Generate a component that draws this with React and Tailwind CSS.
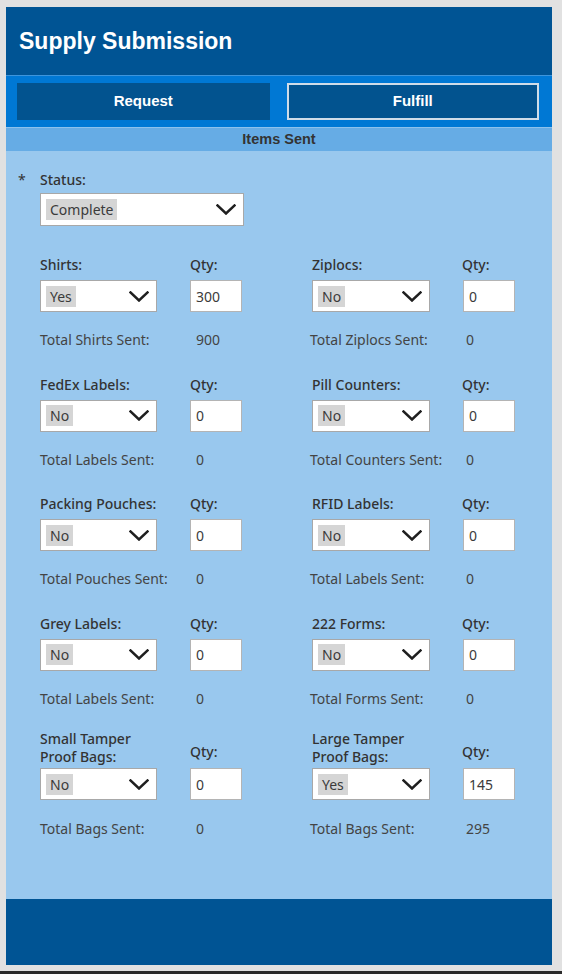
import React from 'react';

const rows = [
    {
        left: { label: 'Shirts:', value: 'Yes', qty: '300', total: 'Total Shirts Sent:', sent: '900' },
        right: { label: 'Ziplocs:', value: 'No', qty: '0', total: 'Total Ziplocs Sent:', sent: '0' },
    },
    {
        left: { label: 'FedEx Labels:', value: 'No', qty: '0', total: 'Total Labels Sent:', sent: '0' },
        right: { label: 'Pill Counters:', value: 'No', qty: '0', total: 'Total Counters Sent:', sent: '0' },
    },
    {
        left: { label: 'Packing Pouches:', value: 'No', qty: '0', total: 'Total Pouches Sent:', sent: '0' },
        right: { label: 'RFID Labels:', value: 'No', qty: '0', total: 'Total Labels Sent:', sent: '0' },
    },
    {
        left: { label: 'Grey Labels:', value: 'No', qty: '0', total: 'Total Labels Sent:', sent: '0' },
        right: { label: '222 Forms:', value: 'No', qty: '0', total: 'Total Forms Sent:', sent: '0' },
    },
    {
        tall: true,
        left: { label: ['Small Tamper', 'Proof Bags:'], value: 'No', qty: '0', total: 'Total Bags Sent:', sent: '0' },
        right: { label: ['Large Tamper', 'Proof Bags:'], value: 'Yes', qty: '145', total: 'Total Bags Sent:', sent: '295' },
    },
];

function Chevron() {
    return (
        <svg width="20" height="11" viewBox="0 0 20 11" fill="none">
            <polyline points="1.5,1.5 10,9.5 18.5,1.5" stroke="#1f1f1f" strokeWidth="2.5" strokeLinecap="square" />
        </svg>
    );
}

function Dropdown({ value, width, height }) {
    return (
        <div className={`flex items-center justify-between bg-white border border-[#a8a8a8] pl-[5px] pr-[7px] ${width} ${height}`}>
            <span className="bg-[#d5d5d5] px-[4px] h-[21px] leading-[21px] text-[14px] text-[#3b3b3b]">{value}</span>
            <Chevron />
        </div>
    );
}

function Item({ item, tall, right }) {
    return (
        <div className="flex flex-col">
            <div className={`flex items-end ${tall ? 'h-[35px]' : 'h-[25px]'}`}>
                <div className={`w-[150px] font-medium text-[#333] text-[14px] ${tall ? 'leading-[18px] pb-[2px]' : 'leading-[20px] pb-[5px]'}`}>
                    {Array.isArray(item.label) ? (
                        <>
                            {item.label[0]}
                            <br />
                            {item.label[1]}
                        </>
                    ) : (
                        item.label
                    )}
                </div>
                <div className={`font-medium text-[#333] text-[14px] leading-[20px] ${tall ? 'pb-[6px]' : 'pb-[5px]'}`}>Qty:</div>
            </div>
            <div className="flex items-center gap-[33px]">
                <Dropdown value={item.value} width={right ? 'w-[118px]' : 'w-[117px]'} height="h-[32px]" />
                <div className="w-[52px] h-[32px] bg-white border border-[#b4b4b4] pl-[5px] flex items-center text-[14px] text-[#3b3b3b]">
                    {item.qty}
                </div>
            </div>
            <div className={`grid grid-cols-[156px_1fr] h-[20px] leading-[20px] text-[14px] text-[#444] ${tall ? 'mt-[19px]' : 'mt-[18px]'} ${right ? 'ml-[-2px]' : ''}`}>
                <span>{item.total}</span>
                <span>{item.sent}</span>
            </div>
        </div>
    );
}

export default function App() {
    return (
        <div className="w-[562px] h-[974px] bg-[#e1e1e1] flex flex-col" style={{ fontFamily: '"Noto Sans", "Open Sans", sans-serif' }}>
            <div className="mt-[7px] ml-[6px] w-[546px] h-[958px] flex flex-col">
                <div className="h-[68px] bg-[#005494] flex items-center pl-[13px]">
                    <h1 className="text-white font-bold text-[23px]" style={{ fontFamily: '"Liberation Sans", Arial, sans-serif' }}>
                        Supply Submission
                    </h1>
                </div>
                <div className="h-[1px] bg-[#3d95dc]" />
                <div className="h-[51px] bg-[#0078d4] grid grid-cols-2 gap-[17px] pl-[11px] pr-[13px] pt-[7px] pb-[7px]"
                    style={{ fontFamily: '"Liberation Sans", Arial, sans-serif' }}>
                    <button className="bg-[#02538f] text-white font-bold text-[15px]">Request</button>
                    <button className="bg-[#02538f] text-white font-bold text-[15px] border-2 border-[#cfdce8]">Fulfill</button>
                </div>
                <div className="h-[1px] bg-[#8ec2ec]" />
                <div className="h-[23px] bg-[#66ace5] flex items-center justify-center text-[#333] font-bold text-[14.5px]"
                    style={{ fontFamily: '"Liberation Sans", Arial, sans-serif' }}>
                    Items Sent
                </div>
                <div className="flex-1 bg-[#99c8ee] pl-[12px] pt-[19px]">
                    <div className="flex">
                        <div className="w-[22px] text-[14px] leading-[20px] text-[#333]">*</div>
                        <div className="flex flex-col">
                            <div className="font-medium text-[#333] text-[14px] leading-[20px]">Status:</div>
                            <div className="mt-[3px]">
                                <Dropdown value="Complete" width="w-[204px]" height="h-[33px]" />
                            </div>
                        </div>
                    </div>
                    <div className="pl-[22px] mt-[29px] flex flex-col gap-[24.5px]">
                        {rows.map((r, i) => (
                            <div key={i} className="grid grid-cols-[272px_1fr]">
                                <Item item={r.left} tall={r.tall} />
                                <Item item={r.right} tall={r.tall} right />
                            </div>
                        ))}
                    </div>
                </div>
                <div className="h-[66px] bg-[#005494]" />
            </div>
            <div className="flex-1" />
            <div className="h-[3px] bg-[#2b2b2b]" />
        </div>
    );
}
